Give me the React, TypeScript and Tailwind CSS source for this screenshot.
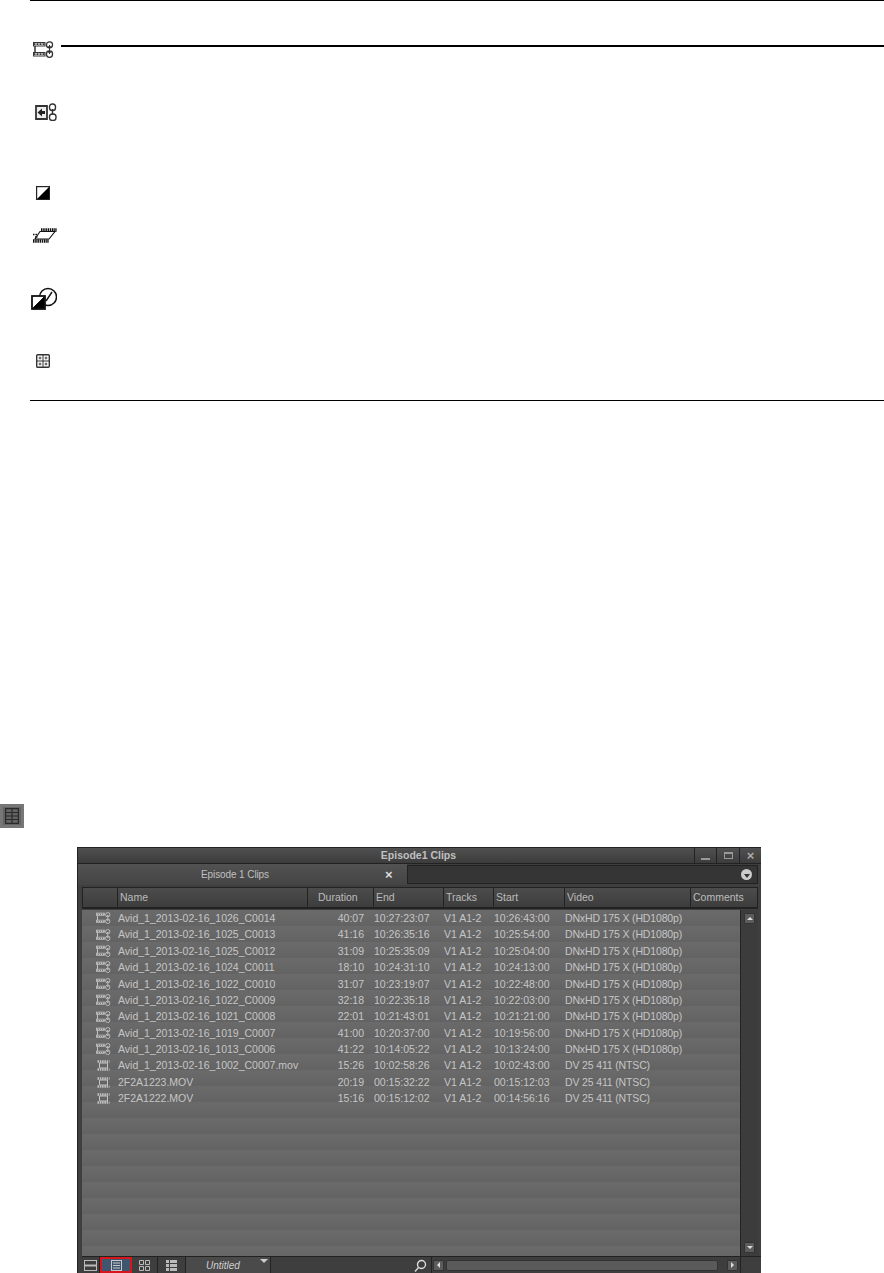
const font = "font-['Liberation_Sans',Arial,sans-serif]";

const linked = [
  ['Avid_1_2013-02-16_1026_C0014', '40:07', '10:27:23:07', '10:26:43:00', 'DNxHD 175 X (HD1080p)'],
  ['Avid_1_2013-02-16_1025_C0013', '41:16', '10:26:35:16', '10:25:54:00', 'DNxHD 175 X (HD1080p)'],
  ['Avid_1_2013-02-16_1025_C0012', '31:09', '10:25:35:09', '10:25:04:00', 'DNxHD 175 X (HD1080p)'],
  ['Avid_1_2013-02-16_1024_C0011', '18:10', '10:24:31:10', '10:24:13:00', 'DNxHD 175 X (HD1080p)'],
  ['Avid_1_2013-02-16_1022_C0010', '31:07', '10:23:19:07', '10:22:48:00', 'DNxHD 175 X (HD1080p)'],
  ['Avid_1_2013-02-16_1022_C0009', '32:18', '10:22:35:18', '10:22:03:00', 'DNxHD 175 X (HD1080p)'],
  ['Avid_1_2013-02-16_1021_C0008', '22:01', '10:21:43:01', '10:21:21:00', 'DNxHD 175 X (HD1080p)'],
  ['Avid_1_2013-02-16_1019_C0007', '41:00', '10:20:37:00', '10:19:56:00', 'DNxHD 175 X (HD1080p)'],
  ['Avid_1_2013-02-16_1013_C0006', '41:22', '10:14:05:22', '10:13:24:00', 'DNxHD 175 X (HD1080p)'],
];
const plain = [
  ['Avid_1_2013-02-16_1002_C0007.mov', '15:26', '10:02:58:26', '10:02:43:00', 'DV 25 411 (NTSC)'],
  ['2F2A1223.MOV', '20:19', '00:15:32:22', '00:15:12:03', 'DV 25 411 (NTSC)'],
  ['2F2A1222.MOV', '15:16', '00:15:12:02', '00:14:56:16', 'DV 25 411 (NTSC)'],
];

function ClipLinkIcon({ className = '', color = '#333' }: { className?: string; color?: string }) {
  return (
    <svg viewBox="0 0 21 17" className={className} fill="none" stroke={color}>
      <rect x="0.5" y="1.500" width="11.500" height="3.500" strokeWidth="1" />
      <rect x="0.5" y="11.500" width="11.500" height="3.500" strokeWidth="1" />
      <path d="M0.5 3.200h11.500M0.5 13.200h11.500" strokeWidth="1.800" strokeDasharray="2 1" />
      <path d="M2 5v6.500" strokeWidth="1.500" />
      <rect x="13.500" y="0.800" width="6" height="6" rx="2.800" strokeWidth="1.300" />
      <rect x="13.500" y="10" width="6" height="6.300" rx="2.800" strokeWidth="1.300" />
      <path d="M16.500 4v9M15 6.500l1.500-2 1.500 2M15 10.500l1.500 2 1.500-2" strokeWidth="1" />
    </svg>
  );
}

function FilmIcon() {
  return (
    <svg viewBox="0 0 13 11" className="h-[11px] w-[13px]" fill="none" stroke="#c4c4c4">
      <path d="M0.500 1.500h12M0.500 9.500h12" strokeWidth="2.400" strokeDasharray="1.500 0.800" />
      <path d="M2.500 3v5M10.500 3v5M2.500 3h8M2.500 8h8" strokeWidth="1" />
    </svg>
  );
}

function Row({ row, linkedClip }: { row: string[]; linkedClip: boolean }) {
  return (
    <div className="grid h-[16.4px] grid-cols-[36px_190px_66px_70px_50px_71px_126px] items-center leading-none">
      <div className="flex justify-center pl-[6px]">
        {linkedClip ? <ClipLinkIcon className="h-[12px] w-[15px]" color="#c4c4c4" /> : <FilmIcon />}
      </div>
      <div className="whitespace-nowrap">{row[0]}</div>
      <div className="pr-[10px] text-right">{row[1]}</div>
      <div>{row[2]}</div>
      <div>V1 A1-2</div>
      <div>{row[3]}</div>
      <div className="whitespace-nowrap tracking-[-0.15px]">{row[4]}</div>
    </div>
  );
}

function Head({ label, className }: { label: string; className: string }) {
  return (
    <div className={`flex items-center border-r border-[#222] bg-gradient-to-b from-[#4c4c4c] to-[#3d3d3d] pl-[2px] ${className}`}>
      {label}
    </div>
  );
}

function ScrollBtn({ children }: { children: React.ReactNode }) {
  return (
    <div className="flex h-[11px] w-[11px] items-center justify-center rounded-[1px] border border-[#333] bg-[#5c5c5c] text-[#ddd]">
      {children}
    </div>
  );
}

export default function App() {
  return (
    <div className={`h-[1273px] w-[884px] overflow-hidden bg-white ${font}`}>
      <div className="ml-[30px] h-[401px] border-b border-t border-black">
        <div className="h-[40px]" />
        <div className="flex h-[17px] items-start">
          <ClipLinkIcon className="ml-[3px] h-[17px] w-[21px]" />
          <div className="ml-[7px] mt-[4px] h-[2px] flex-1 bg-black" />
        </div>
        <div className="ml-[5px] mt-[45px]">
          <svg viewBox="0 0 22 18" className="h-[18px] w-[22px]" fill="none" stroke="#333">
            <path d="M1 3h11v13H1z" fill="#eee" strokeWidth="1.800" />
            <path d="M2.500 9.500l4.500-4v2.500h3v3H7v2.500z" fill="#222" stroke="none" />
            <rect x="14.500" y="1" width="6" height="6.500" rx="2.800" strokeWidth="1.400" />
            <rect x="14.500" y="11" width="6.500" height="6.500" rx="2.800" strokeWidth="1.400" />
            <path d="M17.500 6v6" strokeWidth="1.400" />
          </svg>
        </div>
        <div className="ml-[6px] mt-[65px]">
          <svg viewBox="0 0 14 14" className="h-[14px] w-[14px]">
            <rect x="0.5" y="0.5" width="13" height="13" fill="#fff" stroke="#222" strokeWidth="1.400" />
            <path d="M13 1v12H1z" fill="#000" />
          </svg>
        </div>
        <div className="ml-[2px] mt-[28px]">
          <svg viewBox="0 0 26 15" className="h-[15px] w-[26px]" fill="none" stroke="#111">
            <path d="M9 2h16M1 13h16" strokeWidth="3.400" strokeDasharray="1.500 0.700" />
            <path d="M8 3.500h15L17 11H3z" strokeWidth="1.100" />
            <path d="M1 6.500h5M3 9h3" strokeWidth="1.300" strokeDasharray="1.500 1" />
          </svg>
        </div>
        <div className="ml-[1px] mt-[44px]">
          <svg viewBox="0 0 26 23" className="h-[23px] w-[26px]" fill="none" stroke="#111">
            <circle cx="17" cy="10" r="8.500" strokeWidth="1.500" />
            <path d="M15 14l6-9" strokeWidth="1.400" />
            <rect x="1" y="9" width="13" height="13" fill="#fff" strokeWidth="1.800" />
            <path d="M13.500 9.500v12h-12z" fill="#000" />
          </svg>
        </div>
        <div className="ml-[6px] mt-[44px]">
          <svg viewBox="0 0 14 14" className="h-[14px] w-[14px]" fill="none" stroke="#333">
            <rect x="0.700" y="0.700" width="12.600" height="12.600" rx="1" strokeWidth="1.400" />
            <path d="M7 1v12M1 7h12" strokeWidth="1" />
            <path d="M3.200 3.200h1.600v1.600H3.200zM9.200 3.200h1.600v1.600H9.200zM3.200 9.200h1.600v1.600H3.200zM9.200 9.200h1.600v1.600H9.200z" strokeWidth="0.800" />
          </svg>
        </div>
      </div>

      <div className="mt-[403px] flex h-[24px] w-[24px] items-center justify-center border-[3px] border-[#777] bg-[#636363]">
        <svg viewBox="0 0 14 16" className="h-[16px] w-[14px]" fill="none" stroke="#2a2a2a">
          <rect x="0.500" y="0.500" width="13" height="15" strokeWidth="1.400" />
          <path d="M0.500 4.500h13M0.500 8h13M0.500 11.500h13M7 0.500v15" strokeWidth="1.200" />
        </svg>
      </div>

      <div className="ml-[77px] mt-[19px] h-[426px] w-[684px] border-l border-t border-[#222] bg-[#3f3f3f] text-[10.500px] text-[#c6c6c6]">
        {/* title bar */}
        <div className="flex h-[16px] items-center border-b border-[#222] bg-gradient-to-b from-[#505050] to-[#3c3c3c]">
          <div className="flex-1 pl-[65px] text-center text-[10.500px] font-bold text-[#c0c0c0]">Episode1 Clips</div>
          <div className="flex h-full w-[22px] items-center justify-center border-l border-[#222]">
            <div className="mt-[6px] h-[2px] w-[9px] bg-[#999]" />
          </div>
          <div className="flex h-full w-[23px] items-center justify-center border-l border-[#222]">
            <div className="h-[7px] w-[9px] border border-t-2 border-[#999]" />
          </div>
          <div className="flex h-full w-[22px] items-center justify-center border-l border-[#222] text-[13px] font-bold leading-none text-[#aaa]">
            ×
          </div>
        </div>
        {/* tab row */}
        <div className="flex h-[21px] items-stretch">
          <div className="relative flex w-[329px] items-center bg-gradient-to-b from-[#525252] to-[#444]">
            <span className="ml-[123px] text-[10px] tracking-[-0.1px] text-[#c0c0c0]">Episode 1 Clips</span>
            <span className="absolute left-[307px] text-[13px] font-bold leading-none text-[#ddd]">×</span>
          </div>
          <div className="my-[1px] flex flex-1 items-center justify-end border border-[#222] bg-[#353535] pr-[5px]">
            <div className="flex h-[11px] w-[11px] items-center justify-center rounded-full bg-[#ccc]">
              <div className="mt-[2px] border-x-[3px] border-t-[4px] border-x-transparent border-t-[#333]" />
            </div>
          </div>
          <div className="w-[3px]" />
        </div>
        {/* column headers */}
        <div className="ml-[4px] mr-[3px] mt-[2px] flex h-[22px] border-b-[2px] border-t border-[#222] text-[#bcbcbc]">
          <Head label="" className="w-[36px] border-l" />
          <Head label="Name" className="w-[190px]" />
          <Head label="Duration" className="w-[66px] pl-[10px]" />
          <Head label="End" className="w-[70px]" />
          <Head label="Tracks" className="w-[50px]" />
          <Head label="Start" className="w-[71px]" />
          <Head label="Video" className="w-[126px]" />
          <Head label="Comments" className="flex-1" />
        </div>
        {/* list + scrollbar */}
        <div className="ml-[4px] mr-[3px] mt-[1px] flex h-[346px]">
          <div className="flex-1 bg-[repeating-linear-gradient(to_bottom,#6a6a6a_0px,#676767_8px,#636363_16px)]">
            {linked.map(r => <Row key={r[0]} row={r} linkedClip />)}
            {plain.map(r => <Row key={r[0]} row={r} linkedClip={false} />)}
          </div>
          <div className="flex w-[18px] flex-col items-center justify-between border-l border-[#222] bg-[#3c3c3c] py-[3px]">
            <ScrollBtn>
              <div className="border-x-[3px] border-b-[3px] border-x-transparent border-b-[#ddd]" />
            </ScrollBtn>
            <ScrollBtn>
              <div className="border-x-[3px] border-t-[3px] border-x-transparent border-t-[#ddd]" />
            </ScrollBtn>
          </div>
        </div>
        {/* bottom bar */}
        <div className="ml-[4px] flex h-[17px] items-stretch border-t border-[#222] bg-[#3e3e3e]">
          <div className="flex w-[18px] items-center justify-center border-r border-[#222]">
            <svg viewBox="0 0 13 11" className="h-[11px] w-[13px]" fill="none" stroke="#bbb">
              <rect x="0.500" y="0.500" width="12" height="10" />
              <path d="M0.500 5.500h12" strokeWidth="2" />
            </svg>
          </div>
          <div className="flex w-[32px] items-center justify-center border-[2px] border-[#d8141c] bg-[#3f566e]">
            <svg viewBox="0 0 11 11" className="h-[11px] w-[11px]" fill="none" stroke="#c8c8c8">
              <rect x="0.500" y="0.500" width="10" height="10" />
              <path d="M2 3h7M2 5.500h7M2 8h7" />
            </svg>
          </div>
          <div className="flex w-[26px] items-center justify-center border-r border-[#222]">
            <svg viewBox="0 0 11 11" className="h-[11px] w-[11px]" fill="none" stroke="#bbb">
              <path d="M0.500 0.500h4v4h-4zM6.500 0.500h4v4h-4zM0.500 6.500h4v4h-4zM6.500 6.500h4v4h-4z" />
            </svg>
          </div>
          <div className="flex w-[28px] items-center justify-center border-r border-[#222]">
            <svg viewBox="0 0 11 11" className="h-[11px] w-[11px]" fill="#bbb">
              <path d="M0 0h3v3H0zM4 0h7v3H4zM0 4h3v3H0zM4 4h7v3H4zM0 8h3v3H0zM4 8h7v3H4z" />
            </svg>
          </div>
          <div className="relative flex w-[85px] items-center border-r border-[#222] bg-[#4a4a4a] pl-[20px] text-[10px] italic text-[#d0d0d0]">
            Untitled
            <div className="absolute right-[2px] top-[2px] border-x-[4px] border-t-[4px] border-x-transparent border-t-[#ccc]" />
          </div>
          <div className="flex flex-1 items-center justify-end pr-[4px]">
            <svg viewBox="0 0 13 13" className="h-[13px] w-[13px]" fill="none" stroke="#ddd" strokeWidth="1.400">
              <circle cx="7.500" cy="5.500" r="4" />
              <path d="M4.500 8.500l-3.500 4" />
            </svg>
          </div>
          <div className="flex w-[330px] items-center border-l border-[#222] pl-[1px]">
            <ScrollBtn>
              <div className="border-y-[3px] border-r-[3px] border-y-transparent border-r-[#ddd]" />
            </ScrollBtn>
            <div className="ml-[2px] h-[11px] w-[272px] rounded-[2px] border border-[#333] bg-[#5a5a5a]" />
            <div className="ml-[9px]">
              <ScrollBtn>
                <div className="border-y-[3px] border-l-[3px] border-y-transparent border-l-[#ddd]" />
              </ScrollBtn>
            </div>
            <div className="ml-[2px] h-full border-l border-[#222]" />
          </div>
        </div>
      </div>
    </div>
  );
}
